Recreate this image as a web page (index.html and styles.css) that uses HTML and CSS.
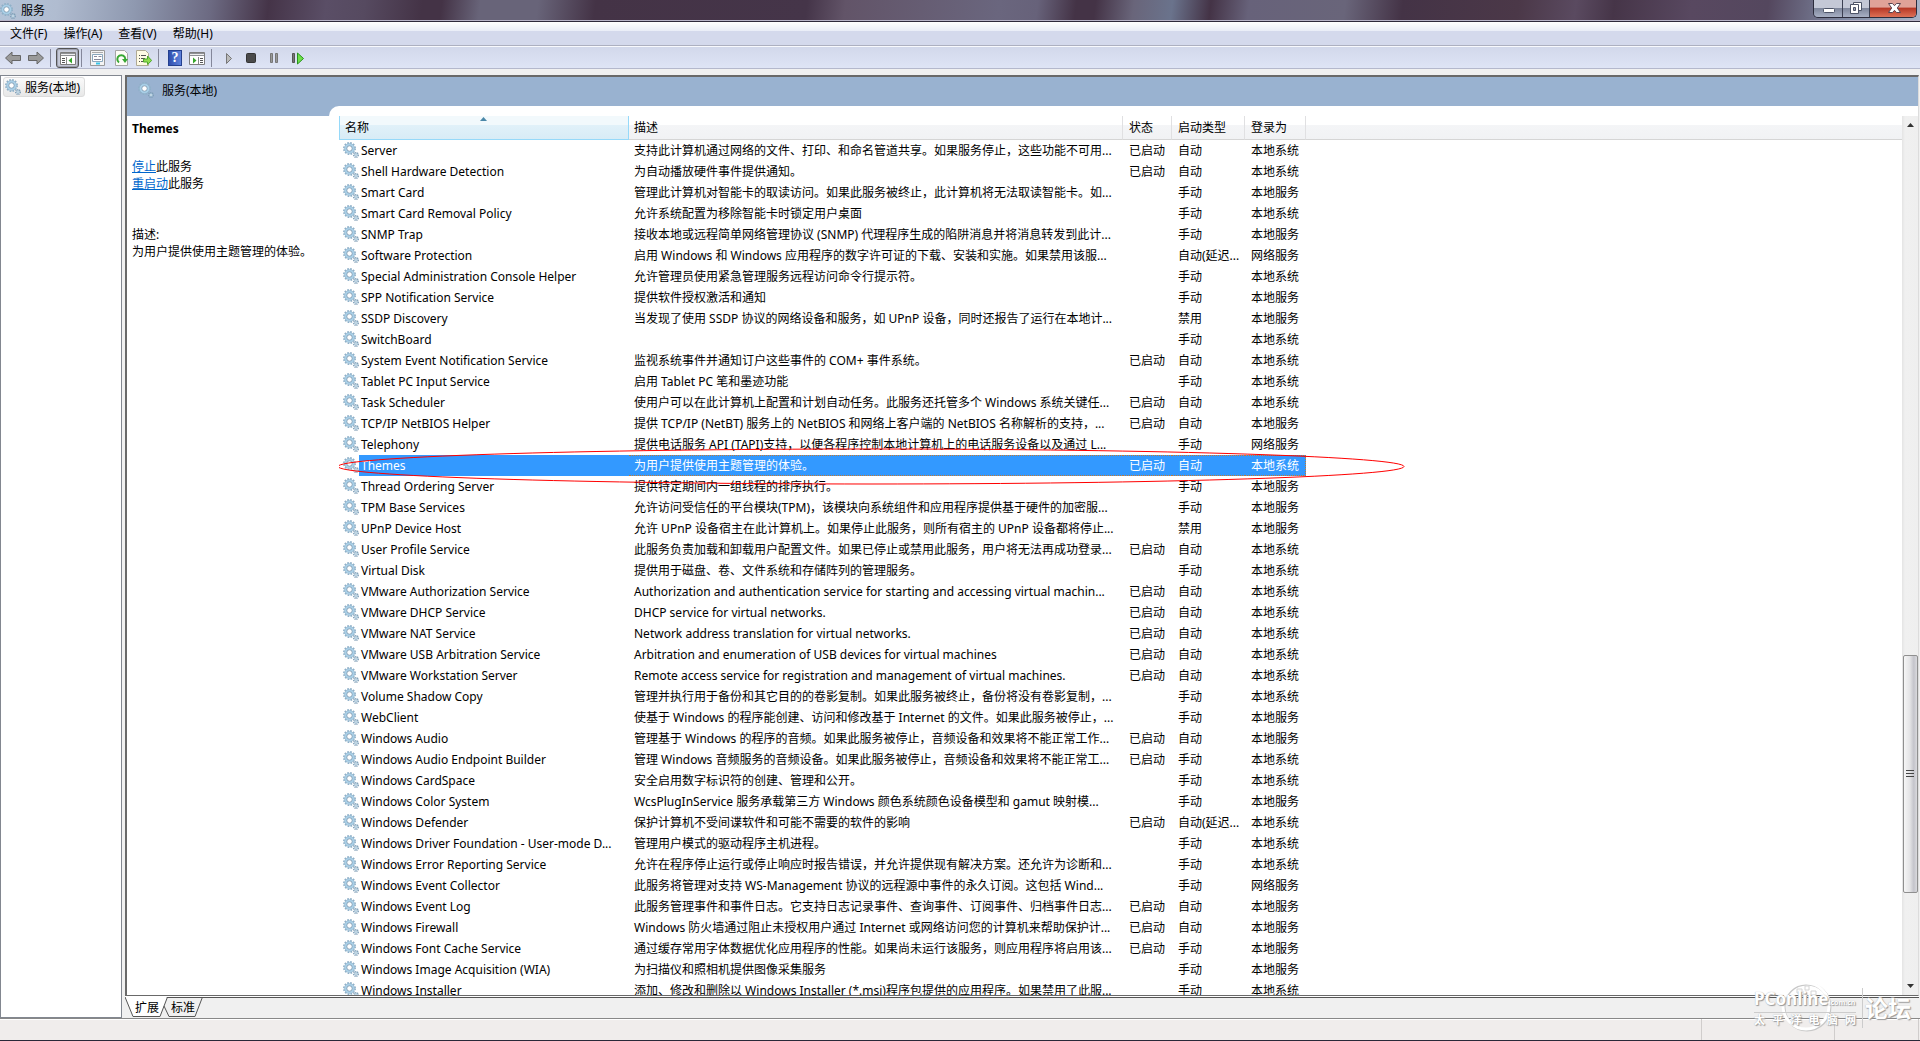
FILE: index.html
```html
<!DOCTYPE html>
<html lang="zh-CN">
<head>
<meta charset="utf-8">
<title>服务</title>
<link rel="stylesheet" href="styles.css">
</head>
<body>
<svg class="defs" aria-hidden="true">
  <symbol id="gear" viewBox="0 0 16 16">
    <circle cx="6.500" cy="6.500" r="5.700" fill="none" stroke="#8fb0c8" stroke-width="1.600" stroke-dasharray="1.700 1.280"/>
    <circle cx="6.500" cy="6.500" r="3.900" fill="#fff" stroke="#a9d0e8" stroke-width="2.400"/>
    <circle cx="6.500" cy="6.500" r="2.700" fill="none" stroke="#7894ac" stroke-width=".8"/>
    <circle cx="6.500" cy="6.500" r="5.100" fill="none" stroke="#8fb0c8" stroke-width=".6"/>
    <circle cx="13" cy="13" r="2.300" fill="none" stroke="#7f9db5" stroke-width="1.400" stroke-dasharray="1.100 .700"/>
    <circle cx="13" cy="13" r="1.300" fill="#fff" stroke="#93b7cf"/>
  </symbol>
</svg>
<div class="window">
  <header class="titlebar">
    <svg class="icon"><use href="#gear"/></svg>
    <h1 class="title">服务</h1>
    <div class="caption-buttons">
      <button class="caption" aria-label="最小化"><svg width="28" height="17"><rect x="9.500" y="8.500" width="11" height="4" rx="1" fill="#fff" stroke="#4d5468"/></svg></button>
      <button class="caption" aria-label="还原"><svg width="26" height="17"><path d="M10.500 2.500h8v8h-8z" fill="#fff" stroke="#4d5468"/><path d="M7.500 4.500h8v9h-8z" fill="#fff" stroke="#4d5468"/><path d="M10.500 7.500h2v3h-2z" fill="#9aa2b8" stroke="#4d5468"/></svg></button>
      <button class="caption close" aria-label="关闭"><svg width="46" height="17"><path d="M18.500 3.500h4l2 2.200 2-2.200h4L27.300 8l3.200 4.500h-4l-2-2.200-2 2.200h-4L21.700 8z" fill="#fff" stroke="#5a4450"/></svg></button>
    </div>
  </header>
  <nav class="menubar">
    <button class="menu">文件(F)</button>
    <button class="menu">操作(A)</button>
    <button class="menu">查看(V)</button>
    <button class="menu">帮助(H)</button>
  </nav>
  <div class="toolbar">
    <div class="tools">
      <button class="tool" aria-label="后退"><svg viewBox="0 0 16 16"><path d="M.5 8 7 2v3.500h8.500v5H7V14z" fill="#9a9a9a" stroke="#666"/></svg></button>
      <button class="tool" aria-label="前进"><svg viewBox="0 0 16 16"><path d="M15.500 8 9 2v3.500H.5v5H9V14z" fill="#9a9a9a" stroke="#666"/></svg></button>
    </div>
    <span class="sep"></span>
    <button class="tool pressed" aria-label="显示/隐藏控制台树"><svg viewBox="0 0 16 16"><path d="M.5 2.500h15v12H.5z" fill="#fff" stroke="#7d7d7d"/><path d="M1 3h14v3H1z" fill="#8f9196"/><path d="M1 4.500h14" stroke="#eee"/><path d="M6.500 7v7" stroke="#888"/><path d="M2 8.500h3M2 10.500h3M2 12.500h3" stroke="#555"/><path d="M12 7.500v6l-3.500-3z" fill="#36a62c"/></svg></button>
    <span class="sep"></span>
    <div class="tools">
      <button class="tool" aria-label="属性"><svg viewBox="0 0 16 16"><path d="M.5.5h14v15H.5z" fill="#f4f4f4" stroke="#999"/><path d="M2 2.500h11" stroke="#aaa"/><path d="M2.500 4.500h10v7h-10z" fill="#fff" stroke="#8aa7bd"/><path d="M4 6.500h3M4 9.500h7M8.500 6.500h3" stroke="#889"/><path d="M6 13.500h4" stroke="#3ac5e8" stroke-width="2"/></svg></button>
      <button class="tool" aria-label="刷新"><svg viewBox="0 0 16 16"><path d="M2.500.5h9l3 3v12h-12z" fill="#fdfdf6" stroke="#a5a5a5"/><path d="M6 12.500A4 4 0 1 1 12.300 9" fill="none" stroke="#38a834" stroke-width="2"/><path d="M9 9h6l-3 4z" fill="#38a834"/></svg></button>
      <button class="tool" aria-label="导出列表"><svg viewBox="0 0 16 16"><path d="M.5.5h9l3 3v12H.5z" fill="#fffbe4" stroke="#b0aa94"/><path d="M3 5.500h1M5 5.500h5M3 8.500h1M5 8.500h4M3 11.500h1M5 11.500h5" stroke="#555"/><path d="M7.500 9h4V6l4.200 4.500-4.200 4V12h-4z" fill="#8fdc4f" stroke="#4fa82d"/></svg></button>
    </div>
    <span class="sep"></span>
    <div class="tools wide">
      <button class="tool help" aria-label="帮助">?</button>
      <button class="tool" aria-label="显示/隐藏操作窗格"><svg viewBox="0 0 16 16"><path d="M.5 2.500h15v12H.5z" fill="#fff" stroke="#7d7d7d"/><path d="M1 3h14v3H1z" fill="#8f9196"/><path d="M1 4.500h14" stroke="#eee"/><path d="M9.500 7v7" stroke="#888"/><path d="M11 8.500h3M11 10.500h3M11 12.500h3" stroke="#555"/><path d="M4 7.500v6l3.500-3z" fill="#36a62c"/></svg></button>
    </div>
    <span class="sep"></span>
    <div class="tools wide">
      <button class="tool" aria-label="启动服务"><svg viewBox="0 0 16 16"><path d="M5.500 3.500v10l5-5z" fill="#bbb" stroke="#777"/></svg></button>
      <button class="tool" aria-label="停止服务"><svg viewBox="0 0 16 16"><rect x="2.500" y="3.500" width="9" height="9" rx="1" fill="#4a4a4a" stroke="#333"/></svg></button>
      <button class="tool" aria-label="暂停服务"><svg viewBox="0 0 16 16"><path d="M3.500 3.500h2v9h-2zM8.500 3.500h2v9h-2z" fill="#999" stroke="#777"/></svg></button>
      <button class="tool" aria-label="重新启动服务"><svg viewBox="0 0 16 16"><path d="M2.500 3.500h2v9h-2z" fill="#777" stroke="#555"/><path d="M7.500 3v11l6-5.500z" fill="#6fe04a" stroke="#26951c"/></svg></button>
    </div>
  </div>
  <main class="panes">
    <aside class="tree"><a class="node" href="#services"><svg class="icon"><use href="#gear"/></svg>服务(本地)</a></aside>
    <section class="content" id="services">
      <div class="view">
        <div class="banner"><svg class="icon"><use href="#gear"/></svg><h2>服务(本地)</h2></div>
        <div class="body">
          <div class="detail">
            <h3>Themes</h3>
            <p class="actions"><a href="#stop">停止</a>此服务<br><a href="#restart">重启动</a>此服务</p>
            <p class="about">描述:<br>为用户提供使用主题管理的体验。</p>
          </div>
          <div class="list">
            <div class="rows">
            <table>
              <colgroup><col class="c-name"><col class="c-desc"><col class="c-state"><col class="c-start"><col class="c-logon"><col></colgroup>
              <thead><tr><th class="sorted">名称<svg class="sort" width="7" height="4"><path d="M0 4 3.500 0 7 4z" fill="#4a87a8"/></svg></th><th>描述</th><th>状态</th><th>启动类型</th><th>登录为</th><th></th></tr></thead>
              <tbody>
<tr><td><svg><use href="#gear"/></svg><span>Server</span></td><td>支持此计算机通过网络的文件、打印、和命名管道共享。如果服务停止，这些功能不可用...</td><td>已启动</td><td>自动</td><td>本地系统</td></tr>
<tr><td><svg><use href="#gear"/></svg><span>Shell Hardware Detection</span></td><td>为自动播放硬件事件提供通知。</td><td>已启动</td><td>自动</td><td>本地系统</td></tr>
<tr><td><svg><use href="#gear"/></svg><span>Smart Card</span></td><td>管理此计算机对智能卡的取读访问。如果此服务被终止，此计算机将无法取读智能卡。如...</td><td></td><td>手动</td><td>本地服务</td></tr>
<tr><td><svg><use href="#gear"/></svg><span>Smart Card Removal Policy</span></td><td>允许系统配置为移除智能卡时锁定用户桌面</td><td></td><td>手动</td><td>本地系统</td></tr>
<tr><td><svg><use href="#gear"/></svg><span>SNMP Trap</span></td><td>接收本地或远程简单网络管理协议 (SNMP) 代理程序生成的陷阱消息并将消息转发到此计...</td><td></td><td>手动</td><td>本地服务</td></tr>
<tr><td><svg><use href="#gear"/></svg><span>Software Protection</span></td><td>启用 Windows 和 Windows 应用程序的数字许可证的下载、安装和实施。如果禁用该服...</td><td></td><td>自动(延迟...</td><td>网络服务</td></tr>
<tr><td><svg><use href="#gear"/></svg><span>Special Administration Console Helper</span></td><td>允许管理员使用紧急管理服务远程访问命令行提示符。</td><td></td><td>手动</td><td>本地系统</td></tr>
<tr><td><svg><use href="#gear"/></svg><span>SPP Notification Service</span></td><td>提供软件授权激活和通知</td><td></td><td>手动</td><td>本地服务</td></tr>
<tr><td><svg><use href="#gear"/></svg><span>SSDP Discovery</span></td><td>当发现了使用 SSDP 协议的网络设备和服务，如 UPnP 设备，同时还报告了运行在本地计...</td><td></td><td>禁用</td><td>本地服务</td></tr>
<tr><td><svg><use href="#gear"/></svg><span>SwitchBoard</span></td><td></td><td></td><td>手动</td><td>本地系统</td></tr>
<tr><td><svg><use href="#gear"/></svg><span>System Event Notification Service</span></td><td>监视系统事件并通知订户这些事件的 COM+ 事件系统。</td><td>已启动</td><td>自动</td><td>本地系统</td></tr>
<tr><td><svg><use href="#gear"/></svg><span>Tablet PC Input Service</span></td><td>启用 Tablet PC 笔和墨迹功能</td><td></td><td>手动</td><td>本地系统</td></tr>
<tr><td><svg><use href="#gear"/></svg><span>Task Scheduler</span></td><td>使用户可以在此计算机上配置和计划自动任务。此服务还托管多个 Windows 系统关键任...</td><td>已启动</td><td>自动</td><td>本地系统</td></tr>
<tr><td><svg><use href="#gear"/></svg><span>TCP/IP NetBIOS Helper</span></td><td>提供 TCP/IP (NetBT) 服务上的 NetBIOS 和网络上客户端的 NetBIOS 名称解析的支持，...</td><td>已启动</td><td>自动</td><td>本地服务</td></tr>
<tr><td><svg><use href="#gear"/></svg><span>Telephony</span></td><td>提供电话服务 API (TAPI)支持，以便各程序控制本地计算机上的电话服务设备以及通过 L...</td><td></td><td>手动</td><td>网络服务</td></tr>
<tr class="selected"><td><svg><use href="#gear"/></svg><span>Themes</span></td><td>为用户提供使用主题管理的体验。</td><td>已启动</td><td>自动</td><td>本地系统</td></tr>
<tr><td><svg><use href="#gear"/></svg><span>Thread Ordering Server</span></td><td>提供特定期间内一组线程的排序执行。</td><td></td><td>手动</td><td>本地服务</td></tr>
<tr><td><svg><use href="#gear"/></svg><span>TPM Base Services</span></td><td>允许访问受信任的平台模块(TPM)，该模块向系统组件和应用程序提供基于硬件的加密服...</td><td></td><td>手动</td><td>本地服务</td></tr>
<tr><td><svg><use href="#gear"/></svg><span>UPnP Device Host</span></td><td>允许 UPnP 设备宿主在此计算机上。如果停止此服务，则所有宿主的 UPnP 设备都将停止...</td><td></td><td>禁用</td><td>本地服务</td></tr>
<tr><td><svg><use href="#gear"/></svg><span>User Profile Service</span></td><td>此服务负责加载和卸载用户配置文件。如果已停止或禁用此服务，用户将无法再成功登录...</td><td>已启动</td><td>自动</td><td>本地系统</td></tr>
<tr><td><svg><use href="#gear"/></svg><span>Virtual Disk</span></td><td>提供用于磁盘、卷、文件系统和存储阵列的管理服务。</td><td></td><td>手动</td><td>本地系统</td></tr>
<tr><td><svg><use href="#gear"/></svg><span>VMware Authorization Service</span></td><td>Authorization and authentication service for starting and accessing virtual machin...</td><td>已启动</td><td>自动</td><td>本地系统</td></tr>
<tr><td><svg><use href="#gear"/></svg><span>VMware DHCP Service</span></td><td>DHCP service for virtual networks.</td><td>已启动</td><td>自动</td><td>本地系统</td></tr>
<tr><td><svg><use href="#gear"/></svg><span>VMware NAT Service</span></td><td>Network address translation for virtual networks.</td><td>已启动</td><td>自动</td><td>本地系统</td></tr>
<tr><td><svg><use href="#gear"/></svg><span>VMware USB Arbitration Service</span></td><td>Arbitration and enumeration of USB devices for virtual machines</td><td>已启动</td><td>自动</td><td>本地系统</td></tr>
<tr><td><svg><use href="#gear"/></svg><span>VMware Workstation Server</span></td><td>Remote access service for registration and management of virtual machines.</td><td>已启动</td><td>自动</td><td>本地系统</td></tr>
<tr><td><svg><use href="#gear"/></svg><span>Volume Shadow Copy</span></td><td>管理并执行用于备份和其它目的的卷影复制。如果此服务被终止，备份将没有卷影复制，...</td><td></td><td>手动</td><td>本地系统</td></tr>
<tr><td><svg><use href="#gear"/></svg><span>WebClient</span></td><td>使基于 Windows 的程序能创建、访问和修改基于 Internet 的文件。如果此服务被停止，...</td><td></td><td>手动</td><td>本地服务</td></tr>
<tr><td><svg><use href="#gear"/></svg><span>Windows Audio</span></td><td>管理基于 Windows 的程序的音频。如果此服务被停止，音频设备和效果将不能正常工作...</td><td>已启动</td><td>自动</td><td>本地服务</td></tr>
<tr><td><svg><use href="#gear"/></svg><span>Windows Audio Endpoint Builder</span></td><td>管理 Windows 音频服务的音频设备。如果此服务被停止，音频设备和效果将不能正常工...</td><td>已启动</td><td>手动</td><td>本地系统</td></tr>
<tr><td><svg><use href="#gear"/></svg><span>Windows CardSpace</span></td><td>安全启用数字标识符的创建、管理和公开。</td><td></td><td>手动</td><td>本地系统</td></tr>
<tr><td><svg><use href="#gear"/></svg><span>Windows Color System</span></td><td>WcsPlugInService 服务承载第三方 Windows 颜色系统颜色设备模型和 gamut 映射模...</td><td></td><td>手动</td><td>本地服务</td></tr>
<tr><td><svg><use href="#gear"/></svg><span>Windows Defender</span></td><td>保护计算机不受间谍软件和可能不需要的软件的影响</td><td>已启动</td><td>自动(延迟...</td><td>本地系统</td></tr>
<tr><td><svg><use href="#gear"/></svg><span>Windows Driver Foundation - User-mode D...</span></td><td>管理用户模式的驱动程序主机进程。</td><td></td><td>手动</td><td>本地系统</td></tr>
<tr><td><svg><use href="#gear"/></svg><span>Windows Error Reporting Service</span></td><td>允许在程序停止运行或停止响应时报告错误，并允许提供现有解决方案。还允许为诊断和...</td><td></td><td>手动</td><td>本地系统</td></tr>
<tr><td><svg><use href="#gear"/></svg><span>Windows Event Collector</span></td><td>此服务将管理对支持 WS-Management 协议的远程源中事件的永久订阅。这包括 Wind...</td><td></td><td>手动</td><td>网络服务</td></tr>
<tr><td><svg><use href="#gear"/></svg><span>Windows Event Log</span></td><td>此服务管理事件和事件日志。它支持日志记录事件、查询事件、订阅事件、归档事件日志...</td><td>已启动</td><td>自动</td><td>本地服务</td></tr>
<tr><td><svg><use href="#gear"/></svg><span>Windows Firewall</span></td><td>Windows 防火墙通过阻止未授权用户通过 Internet 或网络访问您的计算机来帮助保护计...</td><td>已启动</td><td>自动</td><td>本地服务</td></tr>
<tr><td><svg><use href="#gear"/></svg><span>Windows Font Cache Service</span></td><td>通过缓存常用字体数据优化应用程序的性能。如果尚未运行该服务，则应用程序将启用该...</td><td>已启动</td><td>手动</td><td>本地服务</td></tr>
<tr><td><svg><use href="#gear"/></svg><span>Windows Image Acquisition (WIA)</span></td><td>为扫描仪和照相机提供图像采集服务</td><td></td><td>手动</td><td>本地服务</td></tr>
<tr><td><svg><use href="#gear"/></svg><span>Windows Installer</span></td><td>添加、修改和删除以 Windows Installer (*.msi)程序包提供的应用程序。如果禁用了此服...</td><td></td><td>手动</td><td>本地系统</td></tr>
              </tbody>
            </table>
            <svg class="mark" viewBox="0 0 1068 37" aria-hidden="true"><ellipse cx="534" cy="18.500" rx="533" ry="17.500" fill="none" stroke="#f00"/></svg>
            </div>
            <div class="scrollbar">
              <svg width="7" height="4"><path d="M0 4 3.500 0 7 4z" fill="#333"/></svg>
              <div class="track"><div class="thumb"><svg width="8" height="8"><path d="M0 .5h8M0 3.500h8M0 6.500h8" stroke="#444"/></svg></div></div>
              <svg width="7" height="4"><path d="M0 0h7L3.500 4z" fill="#333"/></svg>
            </div>
          </div>
        </div>
      </div>
      <div class="tabs">
        <svg class="tab-lines" width="80" height="20"><path d="M0 0 8 19.500h27L42 0z" fill="#fff"/><path d="M0 0 8 19.500h27M35 19.500 42.500 0h35L70 19.500H44L39 9" fill="none" stroke="#555"/></svg>
        <button class="tab">扩展</button><button class="tab">标准</button>
      </div>
    </section>
  </main>
  <footer class="status"><span></span><span></span></footer>
  <div class="watermark" aria-hidden="true">
    <svg class="globe" width="56" height="56"><circle cx="28" cy="28" r="23" fill="none" stroke="#c8c8c8" stroke-width="3"/><circle cx="27" cy="27" r="23" fill="none" stroke="#fff" stroke-width="3"/><path d="M18 10h5v4h-5zM26 7h4v4h-4zM32 12h5v4h-5zM24 15h4v3h-4z" fill="#fff" stroke="#d4d4d4"/></svg>
    <div class="brand"><div class="latin">PConline<small>.com.cn</small></div><div class="hanzi"><span>太</span><span>平</span><span>洋</span><span>电</span><span>脑</span><span>网</span></div></div>
    <div class="forum">论坛</div>
  </div>
</div>
</body>
</html>
```
FILE: styles.css
```css
* { box-sizing: border-box; }

body {
  margin: 0;
  font: 12px/17px "Noto Sans", "Noto Sans CJK SC", sans-serif;
  color: #000;
}

h1, h2, h3, p { margin: 0; font-size: 12px; font-weight: 400; }
button { font: inherit; color: inherit; border: 0; padding: 0; background: none; }
a { color: #06c; }
svg { display: block; flex: none; }
.defs { position: absolute; width: 0; height: 0; }
.icon { width: 16px; height: 16px; }

.window {
  position: relative;
  display: flex;
  flex-direction: column;
  height: 100vh;
  overflow: hidden;
  background: #f0f0f0;
  border-bottom: 1px solid #2a2838;
}

/* title bar */
.titlebar {
  display: flex;
  align-items: center;
  height: 22px;
  padding: 0 3px 0 0;
  gap: 5px;
  flex: none;
  border-bottom: 1px solid #2e2a3c;
  box-shadow: inset 0 -1px #b8b4c8;
  background: linear-gradient(97deg, #b4c4d8 0, #b0bcd0 3%, #8f99b0 7%, #6c6a82 11%, #453448 14%, #5a4e66 17%, #564a60 19%, #443346 22%, #443346 23%, #686479 25%, #686479 28%, #443346 31%, #453549 42%, #625468 44%, #6a667e 52%, #67627a 54%, #443346 56%, #443346 57%, #69657a 59%, #6a738c 61%, #443346 63%, #67627a 65%, #69657a 70%, #443346 73%, #4b3848 79%, #5a4a60 82%, #463548 84%, #584860 88%, #54475e 92%, #7f89a2 96%, #a8b4c8 100%);
}
.title { flex: 1; }
.caption-buttons {
  display: flex;
  align-self: flex-start;
  height: 18px;
  border: 1px solid #2c2c3c;
  border-top: 0;
  border-radius: 0 0 5px 5px;
  overflow: hidden;
}
.caption { background: linear-gradient(#c4c8d6 0 45%, #7f879c 50%, #a8b0c4); border-right: 1px solid #3c4052; }
.close { background: linear-gradient(#e0a298 0 40%, #b83a28 50%, #dd7056); border: 0; }

/* menus and tools */
.menubar {
  display: flex;
  align-items: center;
  gap: 16px;
  height: 24px;
  padding: 0 10px;
  flex: none;
  background: linear-gradient(#fff, #e9edf7 9px, #d4d9ec 9px);
  border-bottom: 1px solid #adb0c0;
}
.toolbar {
  display: flex;
  align-items: center;
  gap: 6px;
  height: 23px;
  padding: 2px 3px 0;
  flex: none;
  background: linear-gradient(#f8f9fd 1px, #d2d8eb 1px, #dee4f5);
  border-bottom: 1px solid #b4b8cc;
}
.tools { display: flex; gap: 7px; padding-left: 2px; }
.wide { padding-left: 3px; }
.tool { width: 16px; height: 16px; }
.tool svg { width: 16px; height: 16px; }
.sep { width: 1px; height: 18px; background: #84879a; }
.pressed {
  display: flex;
  align-items: center;
  justify-content: center;
  width: 23px;
  height: 20px;
  margin: 0 -4px 0 -1px;
  border: 1px solid #555;
  border-radius: 3px;
  background: #c8ccda;
  box-shadow: inset 0 0 1px 1px #9a9caa;
}
.help {
  width: 14px;
  background: linear-gradient(90deg, #2f4fae, #5f82dc);
  border: 1px solid #24408f;
  color: #fff;
  font: bold 14px/14px "Liberation Serif", serif;
}

/* panes */
.panes { display: flex; flex: 1; min-height: 0; padding-top: 6px; gap: 3px; }
.tree {
  width: 122px;
  padding: 1px 2px;
  background: #fff;
  border: 1px solid #828790;
}
.node {
  display: inline-flex;
  align-items: center;
  gap: 4px;
  height: 20px;
  padding: 0 4px 0 1px;
  border: 1px solid #dcdcdc;
  border-radius: 3px;
  background: linear-gradient(#fafafa, #e8e8e8);
  color: #000;
  text-decoration: none;
}
.content { display: flex; flex-direction: column; flex: 1; min-width: 0; padding-right: 1px; }
.view {
  display: flex;
  flex-direction: column;
  flex: 1;
  min-height: 0;
  background: #fff;
  border: 1px solid #696969;
  border-width: 2px 1px 1px 2px;
  border-right-color: #dcdcdc;
}
.banner {
  display: flex;
  gap: 8px;
  height: 39px;
  flex: none;
  padding: 5px 11px;
  background: #99b2d0;
}
.body { display: flex; flex: 1; min-height: 0; }
.detail { width: 202px; padding: 4px 5px; flex: none; }
.detail h3 { font-weight: 700; margin-bottom: 21px; }
.about { margin-top: 34px; }

/* the list's white sheet rises into the banner */
.list {
  display: flex;
  flex: 1;
  min-width: 0;
  margin-top: -10px;
  padding: 10px 0 0 10px;
  background: #fff;
  border-top-left-radius: 10px;
}
.rows { position: relative; flex: 1; min-width: 0; overflow: hidden; }
table { width: 100%; table-layout: fixed; border-collapse: separate; border-spacing: 0; }
.c-name { width: 290px; }
.c-desc { width: 494px; }
.c-state { width: 49px; }
.c-start { width: 73px; }
.c-logon { width: 61px; }
th {
  position: relative;
  height: 24px;
  padding: 0 5px;
  text-align: left;
  font-weight: 400;
  background: linear-gradient(#fff 9px, #f4f5f7 9px, #f1f2f4);
  border-right: 1px solid #e0e0e2;
  border-bottom: 1px solid #d5d5d5;
}
th:last-child { border-right: 0; }
.sorted {
  background: linear-gradient(#f2f9fc 9px, #e1f1f9 9px, #d8ecf6);
  border: 1px solid #96d9f9;
  border-top: 0;
}
.sort { position: absolute; top: 1px; left: 50%; margin-left: -4px; }
td {
  height: 21px;
  padding: 0 0 0 5px;
  overflow: hidden;
  white-space: nowrap;
}
td:nth-child(n+3), th:nth-child(n+3) { padding-left: 6px; }
td svg { float: left; width: 16px; height: 16px; margin: 2px 0 0 -1px; }
td span { display: block; margin-left: 15px; padding-left: 2px; line-height: 21px; }
.selected td { color: #fff; background: #39f; border: 1px dotted #c47a32; border-width: 1px 0; line-height: 17px; }
.selected td:first-child { background: linear-gradient(90deg, #fff 20px, #39f 20px); border: 0; }
.selected td:last-child { border-right-width: 1px; }
.mark { position: absolute; left: -2px; top: 332px; width: 1068px; height: 37px; overflow: visible; }

.scrollbar {
  display: flex;
  flex-direction: column;
  align-items: center;
  width: 16px;
  padding: 7px 0;
  background: linear-gradient(90deg, #e4e4e4, #f0f0f0 3px, #efefef);
}
.track { display: grid; grid-template-rows: 528fr 238fr 91fr; flex: 1; width: 15px; }
.thumb {
  grid-row: 2;
  display: flex;
  align-items: center;
  justify-content: center;
  border: 1px solid #8f8f8f;
  border-radius: 2px;
  background: linear-gradient(90deg, #f6f6f6, #e4e4e6 45%, #c4c4cb 75%, #dadade);
}

/* bottom */
.tabs {
  position: relative;
  display: flex;
  gap: 12px;
  height: 22px;
  flex: none;
  padding: 1px 10px;
  border-top: 1px solid #fff;
  box-shadow: inset 0 1px #555;
}
.tab-lines { position: absolute; left: 0; top: 0; }
.tab { position: relative; height: 18px; }
.status {
  display: flex;
  justify-content: flex-end;
  height: 22px;
  flex: none;
  padding-right: 1px;
  background: #f0edec;
  border-top: 1px solid #888;
  box-shadow: inset 0 1px #fff;
}
.status span { width: 85px; border-left: 1px solid #d0cdcc; border-right: 1px solid #d0cdcc; }
.status span:first-child { width: 133px; border-right: 0; }

.watermark {
  position: absolute;
  right: 9px;
  bottom: 12px;
  display: flex;
  align-items: center;
  gap: 6px;
  color: #fff;
  font-weight: 700;
  text-shadow: 1px 1px 1px #999, 0 0 1px #aaa;
}
.globe { position: absolute; left: 25px; top: -9px; }
.brand { position: relative; width: 102px; }
.latin { font-size: 17px; line-height: 18px; border-bottom: 1px solid #ccc; white-space: nowrap; }
.latin small { font-size: 7px; }
.hanzi { display: flex; justify-content: space-between; font-size: 11px; line-height: 13px; }
.forum { padding-left: 2px; font-size: 23px; line-height: 40px; border-left: 1px solid #ccc; }
```
